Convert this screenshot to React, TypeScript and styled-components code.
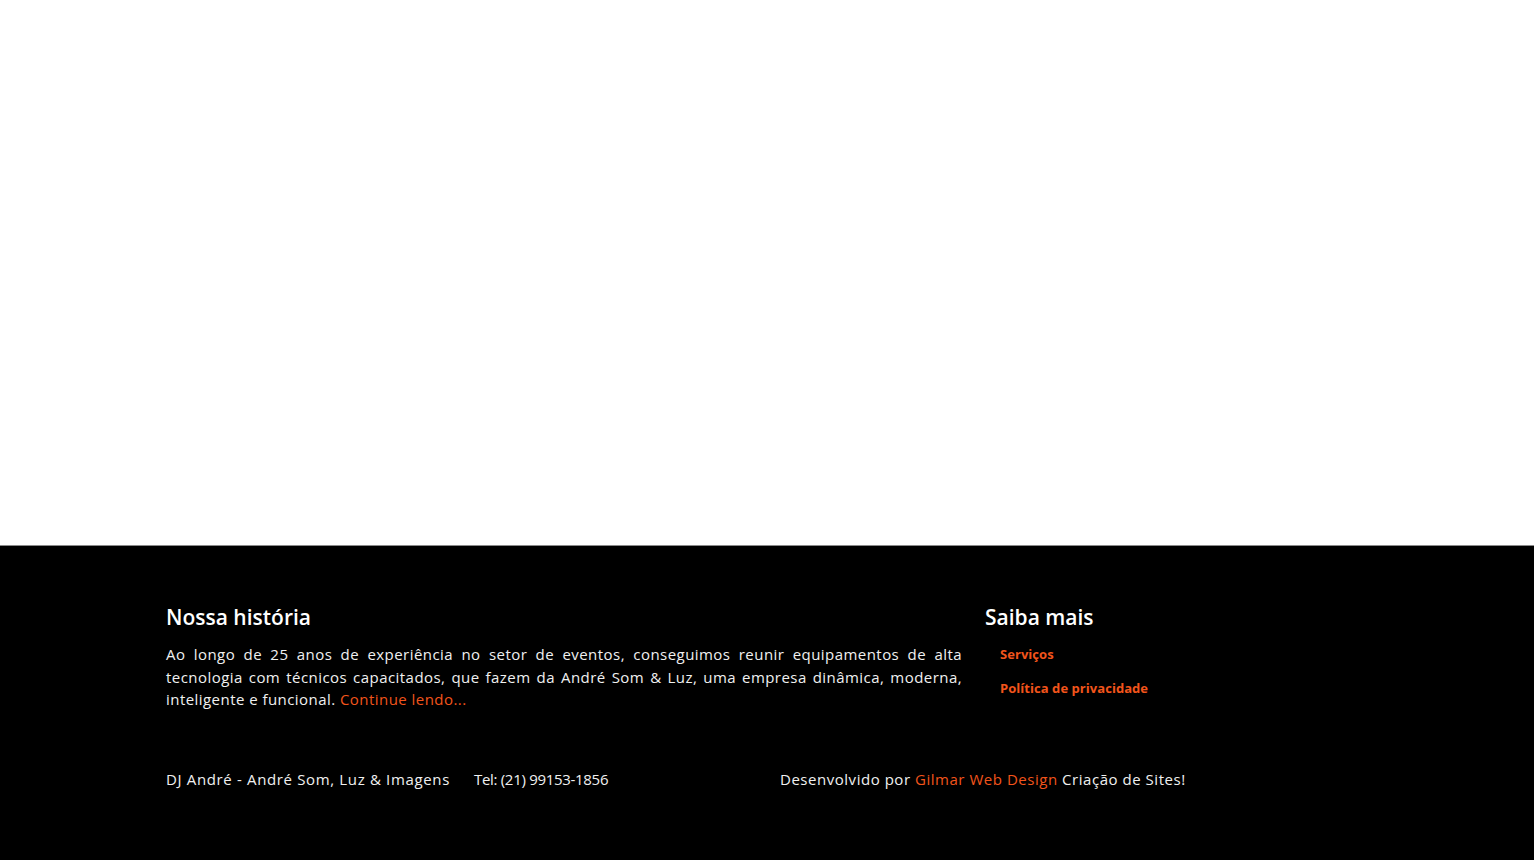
import * as React from "react";
import styled, { createGlobalStyle } from "styled-components";

const accent = "#f2541b";

const GlobalStyle = createGlobalStyle`
  html, body {
    margin: 0;
    padding: 0;
    background: #ffffff;
  }
  body {
    font-family: "Open Sans", "Liberation Sans", sans-serif;
  }
  * {
    box-sizing: border-box;
  }
`;

const Page = styled.div`
  width: 100%;
  min-height: 860px;
  display: flex;
  flex-direction: column;
`;

const Hero = styled.div`
  height: 545px;
  background: #ffffff;
`;

const Footer = styled.footer`
  flex: 1;
  background: #000000;
  border-top: 1px solid #8a8a8a;
  padding: 56px 0 40px;
  color: #f2f2f2;
`;

const Container = styled.div`
  width: 1202px;
  margin: 0 auto;
`;

const TopRow = styled.div`
  display: grid;
  grid-template-columns: 796px 1fr;
  column-gap: 23px;
`;

const Heading = styled.h3`
  margin: 0 0 11px;
  font-family: "Open Sans", "Liberation Sans", sans-serif;
  font-weight: 600;
  font-size: 21px;
  line-height: 30px;
  color: #ffffff;
`;

const Story = styled.p`
  margin: 0;
  font-size: 15px;
  line-height: 22.5px;
  letter-spacing: 0.45px;
  text-align: justify;
  color: #f0f0f0;
`;

const Accent = styled.a`
  color: ${accent};
  text-decoration: none;
`;

const LinkList = styled.ul`
  list-style: none;
  margin: 0;
  padding: 0 0 0 15px;
  display: flex;
  flex-direction: column;
  gap: 12px;
`;

const LinkItem = styled.li`
  font-size: 13px;
  line-height: 22px;
  font-weight: 700;
  letter-spacing: 0.05px;

  & > a {
    color: ${accent};
    text-decoration: none;
  }
`;

const BottomRow = styled.div`
  display: grid;
  grid-template-columns: 1fr 1fr;
  margin-top: 57px;
  font-size: 15px;
  line-height: 22px;
  color: #f0f0f0;
`;

const Credits = styled.div`
  display: flex;
  gap: 24px;
`;

const CreditText = styled.span<{ $spacing: number }>`
  letter-spacing: ${(p) => p.$spacing}px;
`;

const DevCredit = styled.div`
  padding-left: 13px;
  letter-spacing: 0.53px;
`;

export default function App() {
  return (
    <>
      <GlobalStyle />
      <Page>
        <Hero />
        <Footer>
          <Container>
            <TopRow>
              <div>
                <Heading>Nossa história</Heading>
                <Story>
                  Ao longo de 25 anos de experiência no setor de eventos,
                  conseguimos reunir equipamentos de alta tecnologia com técnicos
                  capacitados, que fazem da André Som &amp; Luz, uma empresa
                  dinâmica, moderna, inteligente e funcional.{" "}
                  <Accent href="#">Continue lendo...</Accent>
                </Story>
              </div>
              <div>
                <Heading>Saiba mais</Heading>
                <LinkList>
                  <LinkItem>
                    <a href="#">Serviços</a>
                  </LinkItem>
                  <LinkItem>
                    <a href="#">Política de privacidade</a>
                  </LinkItem>
                </LinkList>
              </div>
            </TopRow>
            <BottomRow>
              <Credits>
                <CreditText $spacing={0.65}>
                  DJ André - André Som, Luz &amp; Imagens
                </CreditText>
                <CreditText $spacing={-0.3}>Tel: (21) 99153-1856</CreditText>
              </Credits>
              <DevCredit>
                Desenvolvido por <Accent href="#">Gilmar Web Design</Accent>{" "}
                Criação de Sites!
              </DevCredit>
            </BottomRow>
          </Container>
        </Footer>
      </Page>
    </>
  );
}
